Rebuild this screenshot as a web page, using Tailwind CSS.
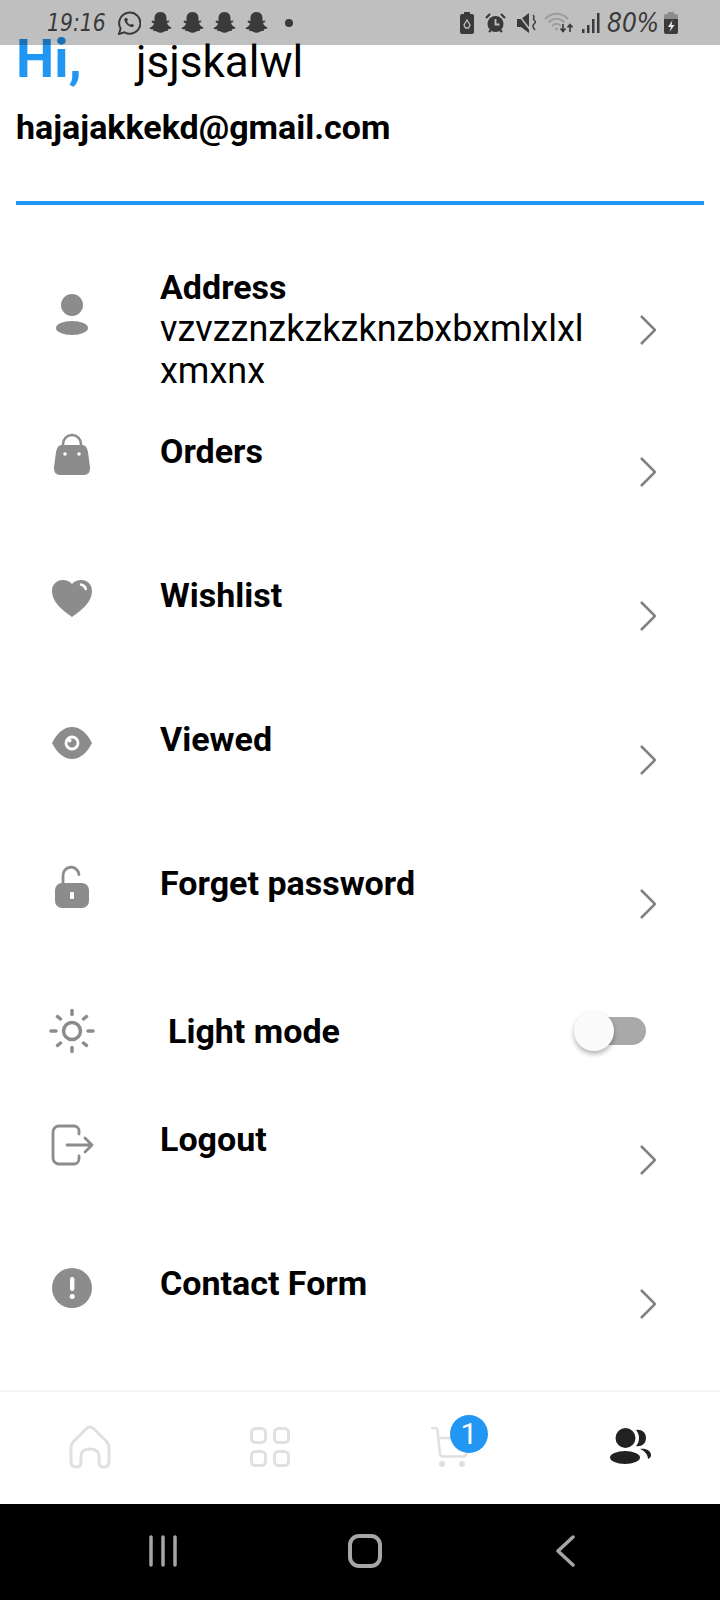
<!DOCTYPE html>
<html lang="en">
<head>
    <meta charset="UTF-8">
    <meta name="viewport" content="width=device-width, initial-scale=1.0">
    <title>Profile</title>
    <script src="https://cdn.jsdelivr.net/npm/@tailwindcss/browser@4"></script>
</head>
<body class="bg-white font-['Roboto',sans-serif]">
<div class="relative w-[720px] h-[1600px] flex flex-col overflow-hidden bg-white">

    <!-- status bar, lies over the content -->
    <div class="absolute top-0 left-0 w-full h-[45px] bg-black/25 flex items-center pl-[47px] pr-[42px] text-[#3a3a3a] z-10">
        <span class="w-[64px] text-[24px] leading-none italic font-['DejaVu_Sans',sans-serif] font-extralight scale-x-85 origin-left">19:16</span>
        <svg class="ml-[6px] w-[24px] h-[24px]" viewBox="0 0 24 24" fill="none" stroke="#3a3a3a" stroke-width="2"><path d="M2 23l1.600-5.600A10.600 10.600 0 1 1 7.500 21.300z"/><path d="M8 7c-1 1-1 3 1 5.500s4.500 4 6.500 3.500c1-.3 1.500-1.200 1.500-2l-2.500-1.300-1 1c-1.500-.5-3-2-3.500-3.500l1-1L10 7z" fill="#3a3a3a" stroke="none"/></svg>
        <div class="ml-[8px] flex gap-[9px]">
            <svg class="w-[23px] h-[22px]" viewBox="1 1 22 22" fill="#3a3a3a"><path d="M12 1c4 0 6 3 6 6v3l2-.5c1 0 1 1 .5 1.500l-2 1c.5 2 2.500 3.500 4.500 4.500 0 1-2 1.500-3.500 1.700l-.5 1.800c-2 0-3 .2-4 1-1.500 1-4.500 1-6 0-1-.8-2-1-4-1l-.5-1.800C3 18.500 1 18 1 17c2-1 4-2.500 4.500-4.500l-2-1C3 11 3 9.500 4 9.500L6 10V7c0-3 2-6 6-6z"/></svg>
            <svg class="w-[23px] h-[22px]" viewBox="1 1 22 22" fill="#3a3a3a"><path d="M12 1c4 0 6 3 6 6v3l2-.5c1 0 1 1 .5 1.500l-2 1c.5 2 2.500 3.500 4.500 4.500 0 1-2 1.500-3.500 1.700l-.5 1.800c-2 0-3 .2-4 1-1.500 1-4.500 1-6 0-1-.8-2-1-4-1l-.5-1.800C3 18.500 1 18 1 17c2-1 4-2.500 4.500-4.500l-2-1C3 11 3 9.500 4 9.500L6 10V7c0-3 2-6 6-6z"/></svg>
            <svg class="w-[23px] h-[22px]" viewBox="1 1 22 22" fill="#3a3a3a"><path d="M12 1c4 0 6 3 6 6v3l2-.5c1 0 1 1 .5 1.500l-2 1c.5 2 2.500 3.500 4.500 4.500 0 1-2 1.500-3.500 1.700l-.5 1.800c-2 0-3 .2-4 1-1.500 1-4.500 1-6 0-1-.8-2-1-4-1l-.5-1.800C3 18.500 1 18 1 17c2-1 4-2.500 4.500-4.500l-2-1C3 11 3 9.500 4 9.500L6 10V7c0-3 2-6 6-6z"/></svg>
            <svg class="w-[23px] h-[22px]" viewBox="1 1 22 22" fill="#3a3a3a"><path d="M12 1c4 0 6 3 6 6v3l2-.5c1 0 1 1 .5 1.500l-2 1c.5 2 2.500 3.500 4.500 4.500 0 1-2 1.500-3.500 1.700l-.5 1.800c-2 0-3 .2-4 1-1.500 1-4.500 1-6 0-1-.8-2-1-4-1l-.5-1.800C3 18.500 1 18 1 17c2-1 4-2.500 4.500-4.500l-2-1C3 11 3 9.500 4 9.500L6 10V7c0-3 2-6 6-6z"/></svg>
        </div>
        <span class="ml-[17px] w-[8px] h-[8px] rounded-full bg-[#3a3a3a]"></span>

        <div class="ml-auto flex items-center">
            <svg class="w-[14px] h-[22px]" viewBox="0 0 14 22"><path d="M4 0h6v2h2a2 2 0 0 1 2 2v16a2 2 0 0 1-2 2H2a2 2 0 0 1-2-2V4a2 2 0 0 1 2-2h2z" fill="#3a3a3a"/><path d="M7 8l3 5-1.500 3h-3L4 13z" fill="none" stroke="#bfbfbf" stroke-width="1.300"/></svg>
            <svg class="ml-[11px] w-[21px] h-[20px]" viewBox="0 0 21 20"><circle cx="10.500" cy="11" r="8" fill="#3a3a3a"/><path d="M1 5l4-4M20 5l-4-4M4 19l2-2M17 19l-2-2" stroke="#3a3a3a" stroke-width="2.200"/><path d="M10.500 6v5.500h4" fill="none" stroke="#bfbfbf" stroke-width="1.800"/></svg>
            <svg class="ml-[11px] w-[21px] h-[20px]" viewBox="0 0 21 20"><path d="M0 6h4l8-6v20l-8-6H0z" fill="#3a3a3a"/><path d="M1 1l13 17" stroke="#bfbfbf" stroke-width="1.500"/><path d="M16 2c3 2-1 3 1 5s2 2 0 4-1 3 1 6" fill="none" stroke="#3a3a3a" stroke-width="1.500"/></svg>
            <svg class="ml-[6px] w-[29px] h-[21px]" viewBox="0 0 29 21" fill="none"><path d="M1 7c7-7 16-7 23 0M4.500 10.500c5-5 11-5 16 0M8 14c3-3 6-3 9 0" stroke="#9c9c9c" stroke-width="1.800"/><circle cx="12.500" cy="17" r="1.500" fill="#9c9c9c"/><path d="M19 12v7m-2.500-2.500L19 19.500l2.500-3M26 20v-7m-2.500 2.500L26 12.500l2.500 3" stroke="#3a3a3a" stroke-width="1.600"/></svg>
            <svg class="ml-[9px] w-[18px] h-[21px]" viewBox="0 0 18 21" fill="#3a3a3a"><rect x="0" y="17" width="2.500" height="4"/><rect x="5" y="13" width="2.500" height="8"/><rect x="10" y="7" width="2.500" height="14"/><rect x="15" y="1" width="2.500" height="20"/></svg>
            <span class="ml-[7px] w-[54px] text-[26px] leading-none italic font-['DejaVu_Sans',sans-serif] font-extralight scale-x-90 origin-left whitespace-nowrap">80%</span>
            <svg class="ml-[3px] w-[14px] h-[22px]" viewBox="0 0 14 22"><path d="M4 0h6v2h2a2 2 0 0 1 2 2v3H0V4a2 2 0 0 1 2-2h2z" fill="#8c8c8c"/><path d="M0 7h14v13a2 2 0 0 1-2 2H2a2 2 0 0 1-2-2z" fill="#3a3a3a"/><path d="M8.500 8L4 15h3l-1.500 5L10.500 13H7.500z" fill="#e8e8e8"/></svg>
        </div>
    </div>

    <div class="flex-1 min-h-0">
        <!-- header -->
        <div class="px-4 h-[205px]">
            <div class="flex items-baseline h-[88px] pt-[32px]">
                <span class="w-[120px] text-[54px] leading-[54px] font-bold text-[#2196f3]">Hi,</span>
                <span class="text-[44px] leading-[54px] text-black font-normal">jsjskalwl</span>
            </div>
            <div class="mt-[19px] text-[34px] leading-[40px] font-bold text-black">hajajakkekd@gmail.com</div>
            <div class="mt-[54px] h-[4px] bg-[#2196f3]"></div>
        </div>

        <div class="pt-[62px] pl-[48px] pr-[64px] text-black text-[34px] leading-[42px]">
            <!-- address -->
            <div class="flex items-start mb-[38px]">
                <svg class="w-[48px] h-[48px] mt-[24px] shrink-0" viewBox="0 0 48 48" fill="#8c8c8c"><circle cx="24" cy="14" r="11"/><ellipse cx="24" cy="37" rx="16" ry="7"/></svg>
                <div class="ml-[64px] flex-1 min-w-0 -mt-[1px]">
                    <div class="font-bold">Address</div>
                    <div class="w-[432px] break-all text-[36px]">vzvzznzkzkzknzbxbxmlxlxlxmxnx</div>
                </div>
                <svg class="w-[16px] h-[30px] mt-[48px] shrink-0" viewBox="0 0 16 30" fill="none" stroke="#808080" stroke-width="2.500"><path d="M1 1l14 14L1 29"/></svg>
            </div>

            <!-- orders -->
            <div class="flex items-start mb-[60px]">
                <svg class="w-[48px] h-[48px] shrink-0" viewBox="0 0 48 48" fill="#8c8c8c"><path d="M15 16v-2a9 9 0 0 1 18 0v2" fill="none" stroke="#8c8c8c" stroke-width="2.500"/><path d="M14 15h20c4 0 5 3 6 7l2 15c.5 5-2 8-6 8H12c-4 0-6.500-3-6-8l2-15c1-4 2-7 6-7z"/><circle cx="17" cy="24" r="1.800" fill="#fff"/><circle cx="31" cy="24" r="1.800" fill="#fff"/></svg>
                <div class="ml-[64px] flex-1 h-[84px] font-bold">Orders</div>
                <svg class="w-[16px] h-[30px] mt-[27px] shrink-0" viewBox="0 0 16 30" fill="none" stroke="#808080" stroke-width="2.500"><path d="M1 1l14 14L1 29"/></svg>
            </div>

            <!-- wishlist -->
            <div class="flex items-start mb-[60px]">
                <svg class="w-[48px] h-[48px] shrink-0" viewBox="0 0 48 48" fill="#8c8c8c"><path d="M24 43C14 36 4 28 4 17 4 10 9 6 14.500 6c4 0 7.500 1.500 9.500 4 2-2.500 5.500-4 9.500-4C39 6 44 10 44 17c0 11-10 19-20 26z"/><path d="M33 10.500c2.500.5 4 2 4.800 4.500" fill="none" stroke="#fff" stroke-width="2.500" stroke-linecap="round"/></svg>
                <div class="ml-[64px] flex-1 h-[84px] font-bold">Wishlist</div>
                <svg class="w-[16px] h-[30px] mt-[27px] shrink-0" viewBox="0 0 16 30" fill="none" stroke="#808080" stroke-width="2.500"><path d="M1 1l14 14L1 29"/></svg>
            </div>

            <!-- viewed -->
            <div class="flex items-start mb-[60px]">
                <svg class="w-[48px] h-[48px] shrink-0" viewBox="0 0 48 48" fill="#8c8c8c"><path d="M4 25c5-10 12-16 20-16s15 6 20 16c-5 10-12 16-20 16S9 35 4 25z"/><circle cx="24" cy="25" r="6" fill="none" stroke="#fff" stroke-width="2.800"/><circle cx="21.500" cy="22.500" r="2" fill="#fff"/></svg>
                <div class="ml-[64px] flex-1 h-[84px] font-bold">Viewed</div>
                <svg class="w-[16px] h-[30px] mt-[27px] shrink-0" viewBox="0 0 16 30" fill="none" stroke="#808080" stroke-width="2.500"><path d="M1 1l14 14L1 29"/></svg>
            </div>

            <!-- forget password -->
            <div class="flex items-start mb-[59px]">
                <svg class="w-[48px] h-[48px] shrink-0" viewBox="0 0 48 48" fill="#8c8c8c"><path d="M15 22v-8a8 8 0 0 1 16-1.500" fill="none" stroke="#8c8c8c" stroke-width="2.800" stroke-linecap="round"/><rect x="7" y="21" width="34" height="25" rx="7"/><rect x="22" y="30" width="4" height="7" rx="1" fill="#fff"/></svg>
                <div class="ml-[64px] flex-1 h-[84px] font-bold">Forget password</div>
                <svg class="w-[16px] h-[30px] mt-[27px] shrink-0" viewBox="0 0 16 30" fill="none" stroke="#808080" stroke-width="2.500"><path d="M1 1l14 14L1 29"/></svg>
            </div>

            <!-- light mode -->
            <div class="flex items-center h-[52px] mb-[61px]">
                <svg class="w-[48px] h-[48px] shrink-0" viewBox="0 0 48 48" fill="none" stroke="#8c8c8c" stroke-width="3.500" stroke-linecap="round"><circle cx="24" cy="24" r="8.500"/><path d="M24 3.500v4M24 40.500v4M3 24h5M40 24h5M9.500 9.500l3 2.500M35.500 36l3 2.500M9.500 38.500l3-2.500M35.500 12l3-2.500"/></svg>
                <div class="ml-[72px] flex-1 font-bold">Light mode</div>
                <div class="relative w-[72px] h-[40px] mr-[10px] flex items-center justify-end">
                    <div class="w-[56px] h-[28px] rounded-full bg-[#a9a9a9]"></div>
                    <div class="absolute left-0 top-0 w-[40px] h-[40px] rounded-full bg-[#fafafa] shadow-[0_3px_5px_rgba(0,0,0,0.3)]"></div>
                </div>
            </div>

            <!-- logout -->
            <div class="flex items-start mb-[60px]">
                <svg class="w-[48px] h-[48px] shrink-0" viewBox="0 0 48 48" fill="none" stroke="#8c8c8c" stroke-width="2.800" stroke-linecap="round" stroke-linejoin="round"><path d="M31 16v-3a5 5 0 0 0-5-5H11a6 6 0 0 0-6 6v26a6 6 0 0 0 6 6h15a5 5 0 0 0 5-5v-3"/><path d="M19 27h25M37 20l7 7-7 7"/></svg>
                <div class="ml-[64px] flex-1 h-[84px] font-bold">Logout</div>
                <svg class="w-[16px] h-[30px] mt-[27px] shrink-0" viewBox="0 0 16 30" fill="none" stroke="#808080" stroke-width="2.500"><path d="M1 1l14 14L1 29"/></svg>
            </div>

            <!-- contact form -->
            <div class="flex items-start">
                <svg class="w-[48px] h-[48px] shrink-0" viewBox="0 0 48 48" fill="#8c8c8c"><circle cx="24" cy="26" r="20"/><rect x="22" y="15" width="4.400" height="14" rx="2.200" fill="#fff"/><circle cx="24.200" cy="34.500" r="2.500" fill="#fff"/></svg>
                <div class="ml-[64px] flex-1 h-[84px] font-bold">Contact Form</div>
                <svg class="w-[16px] h-[30px] mt-[27px] shrink-0" viewBox="0 0 16 30" fill="none" stroke="#808080" stroke-width="2.500"><path d="M1 1l14 14L1 29"/></svg>
            </div>
        </div>
    </div>

    <!-- bottom tabs -->
    <div class="h-[114px] shrink-0 border-t-2 border-[#f5f5f5] bg-white grid grid-cols-4 items-center">
        <div class="flex justify-center -mt-[2px]">
            <svg class="w-[42px] h-[44px]" viewBox="0 0 42 44" fill="none" stroke="#e0e0e0" stroke-width="3" stroke-linejoin="round"><path d="M21 2c2 0 3 1 4 2l12 12c2 2 3 4 3 7v13c0 4-2 6-5 6h-1c-3 0-4-2-4-5v-6c0-4-3-7-9-7s-9 3-9 7v6c0 3-1 5-4 5H7c-3 0-5-2-5-6V23c0-3 1-5 3-7L17 4c1-1 2-2 4-2z"/></svg>
        </div>
        <div class="flex justify-center -mt-[3px]">
            <svg class="w-[40px] h-[40px]" viewBox="0 0 40 40" fill="none" stroke="#e0e0e0" stroke-width="3"><rect x="1.500" y="1.500" width="14" height="14" rx="4"/><rect x="24.500" y="1.500" width="14" height="14" rx="4"/><rect x="1.500" y="24.500" width="14" height="14" rx="4"/><rect x="24.500" y="24.500" width="14" height="14" rx="4"/></svg>
        </div>
        <div class="relative flex justify-center -mt-[4px]">
            <svg class="w-[38px] h-[40px] mt-[1px]" viewBox="0 0 38 40" fill="none" stroke="#e0e0e0" stroke-width="2.500" stroke-linecap="round"><path d="M1 1h3c1.500 0 2.500 1 2.500 2.500L9 27c.2 1.500 1 2.500 3 2.500h20c2 0 3-1 3.500-2.500L37 11H7"/><circle cx="11" cy="37" r="1.800" fill="#e0e0e0"/><circle cx="31" cy="37" r="1.800" fill="#e0e0e0"/></svg>
            <div class="absolute left-[90px] top-[-11px] w-[38px] h-[38px] rounded-full bg-[#2196f3] text-white text-[30px] leading-[38px] text-center">1</div>
        </div>
        <div class="flex justify-center -mt-[5px]">
            <svg class="w-[42px] h-[36px]" viewBox="0 0 42 36" fill="#212121"><circle cx="16.500" cy="10" r="10"/><ellipse cx="16" cy="29.500" rx="15" ry="6.500"/><path d="M27 2c5-1 10 2 10 8s-5 9-10 8c2-2 3-5 3-8s-1-6-3-8z"/><path d="M31 21c6-1 11 2 11 6 0 2-1 3-3 4 0-4-3-8-8-10z"/></svg>
        </div>
    </div>

    <!-- android nav -->
    <div class="h-[96px] shrink-0 bg-black relative flex items-center">
        <svg class="ml-[149px] w-[28px] h-[32px] -mt-[3px]" viewBox="0 0 28 32" stroke="#a6a6a6" stroke-width="3.500" stroke-linecap="round"><path d="M2 2v28M14 2v28M26 2v28"/></svg>
        <svg class="ml-[171px] w-[34px] h-[34px] -mt-[3px]" viewBox="0 0 34 34" fill="none" stroke="#a6a6a6" stroke-width="4"><rect x="2" y="2" width="30" height="30" rx="9"/></svg>
        <svg class="ml-[173px] w-[20px] h-[32px] -mt-[3px]" viewBox="0 0 20 32" fill="none" stroke="#a6a6a6" stroke-width="3.500" stroke-linecap="round" stroke-linejoin="round"><path d="M18 2L3 16l15 14"/></svg>
    </div>
</div>
</body>
</html>
